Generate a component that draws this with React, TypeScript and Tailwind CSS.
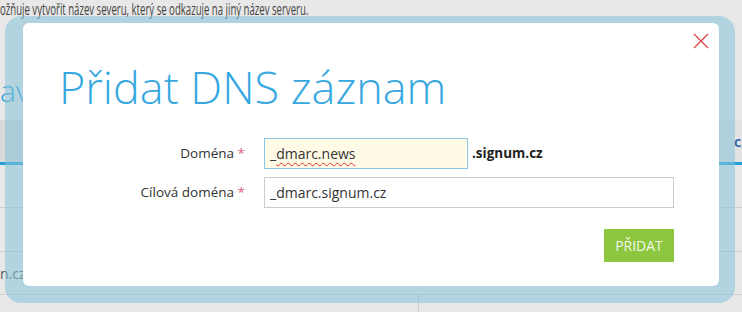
import React from 'react';

const font = { fontFamily: '"Open Sans", "Noto Sans", sans-serif' };

function BackgroundPage() {
  return (
    <div className="flex h-full w-full flex-col text-[#444]">
      {/* intro sentence, clipped at the left edge */}
      <div className="h-[20px] whitespace-nowrap">
        <p className="w-max origin-left scale-x-[0.6] text-[16px] leading-[19px] text-[#444]">
          ožňuje vytvořit název severu, který se odkazuje na jiný název serveru.
        </p>
      </div>
      <div className="flex h-[100px] items-end pb-[14px]">
        <span className="text-[30px] font-light leading-[30px] text-[#2f9fd6]">av</span>
      </div>
      {/* tab strip */}
      <div className="flex h-[45px] border-b-[3px] border-[#2aa0d8] bg-[#dadada]">
        <div className="flex-1" />
        <div className="flex w-[22px] items-center bg-[#e2e2e2] pl-[14px] text-[15px] font-semibold text-[#1f5fa3]">
          c
        </div>
      </div>
      <div className="h-[43px] border-b border-[#cfcfcf]" />
      <div className="h-[44px] border-b border-[#cfcfcf]" />
      <div className="flex h-[43px] items-center border-b border-[#cfcfcf]">
        <span className="text-[14px] text-[#555]">n.cz</span>
      </div>
      <div className="flex flex-1">
        <div className="w-[419px] border-r border-[#cfcfcf]" />
      </div>
    </div>
  );
}

function CloseIcon() {
  return (
    <svg width="16" height="16" viewBox="0 0 16 16" fill="none">
      <path d="M1 1 L15 15 M15 1 L1 15" stroke="#e0464c" strokeWidth="1.4" />
    </svg>
  );
}

function AddDnsModal() {
  return (
    <div className="absolute left-[5px] top-[16px] flex h-[287px] w-[730px] rounded-[16px] bg-[rgba(132,194,216,0.55)] pb-[17px] pl-[18px] pr-[16px] pt-[7px]">
      <div className="relative flex-1 rounded-[6px] bg-white">
        <button className="absolute right-[10px] top-[10px]" aria-label="Zavřít">
          <CloseIcon />
        </button>

        <h1 className="pl-[36px] pt-[34px] text-[45px] font-light leading-[60px] text-[#36a8df]">
          Přidat DNS záznam
        </h1>

        <form className="mt-[21px] flex w-[651px] flex-col gap-[8px]">
          <div className="flex items-center">
            <label className="w-[222px] text-right text-[13.5px] text-[#333]">
              Doména <span className="text-[#db5b7e]">*</span>
            </label>
            <div className="ml-[19px] flex h-[31px] w-[204px] items-center border border-[#8cc6e7] bg-[#fffbe6] px-[5px] text-[14px] text-[#333]">
              _<span className="underline decoration-[#e03030] decoration-wavy decoration-1 underline-offset-[3px]">dmarc.news</span>
            </div>
            <span className="ml-[4px] text-[13.5px] font-bold text-[#222]">.signum.cz</span>
          </div>
          <div className="flex items-center">
            <label className="w-[222px] text-right text-[13.5px] text-[#333]">
              Cílová doména <span className="text-[#db5b7e]">*</span>
            </label>
            <div className="ml-[19px] flex h-[31px] w-[410px] items-center border border-[#cccccc] bg-white px-[5px] text-[14px] text-[#333]">
              _dmarc.signum.cz
            </div>
          </div>
          <div className="mt-[13px] flex justify-end">
            <button
              type="button"
              className="h-[33px] w-[70px] bg-[#8dc63f] text-[14px] text-[#f3f9ea]"
            >
              PŘIDAT
            </button>
          </div>
        </form>
      </div>
    </div>
  );
}

export default function App() {
  return (
    <div className="relative h-[312px] w-[742px] overflow-hidden bg-[#e8e8e8]" style={font}>
      <BackgroundPage />
      <AddDnsModal />
    </div>
  );
}
